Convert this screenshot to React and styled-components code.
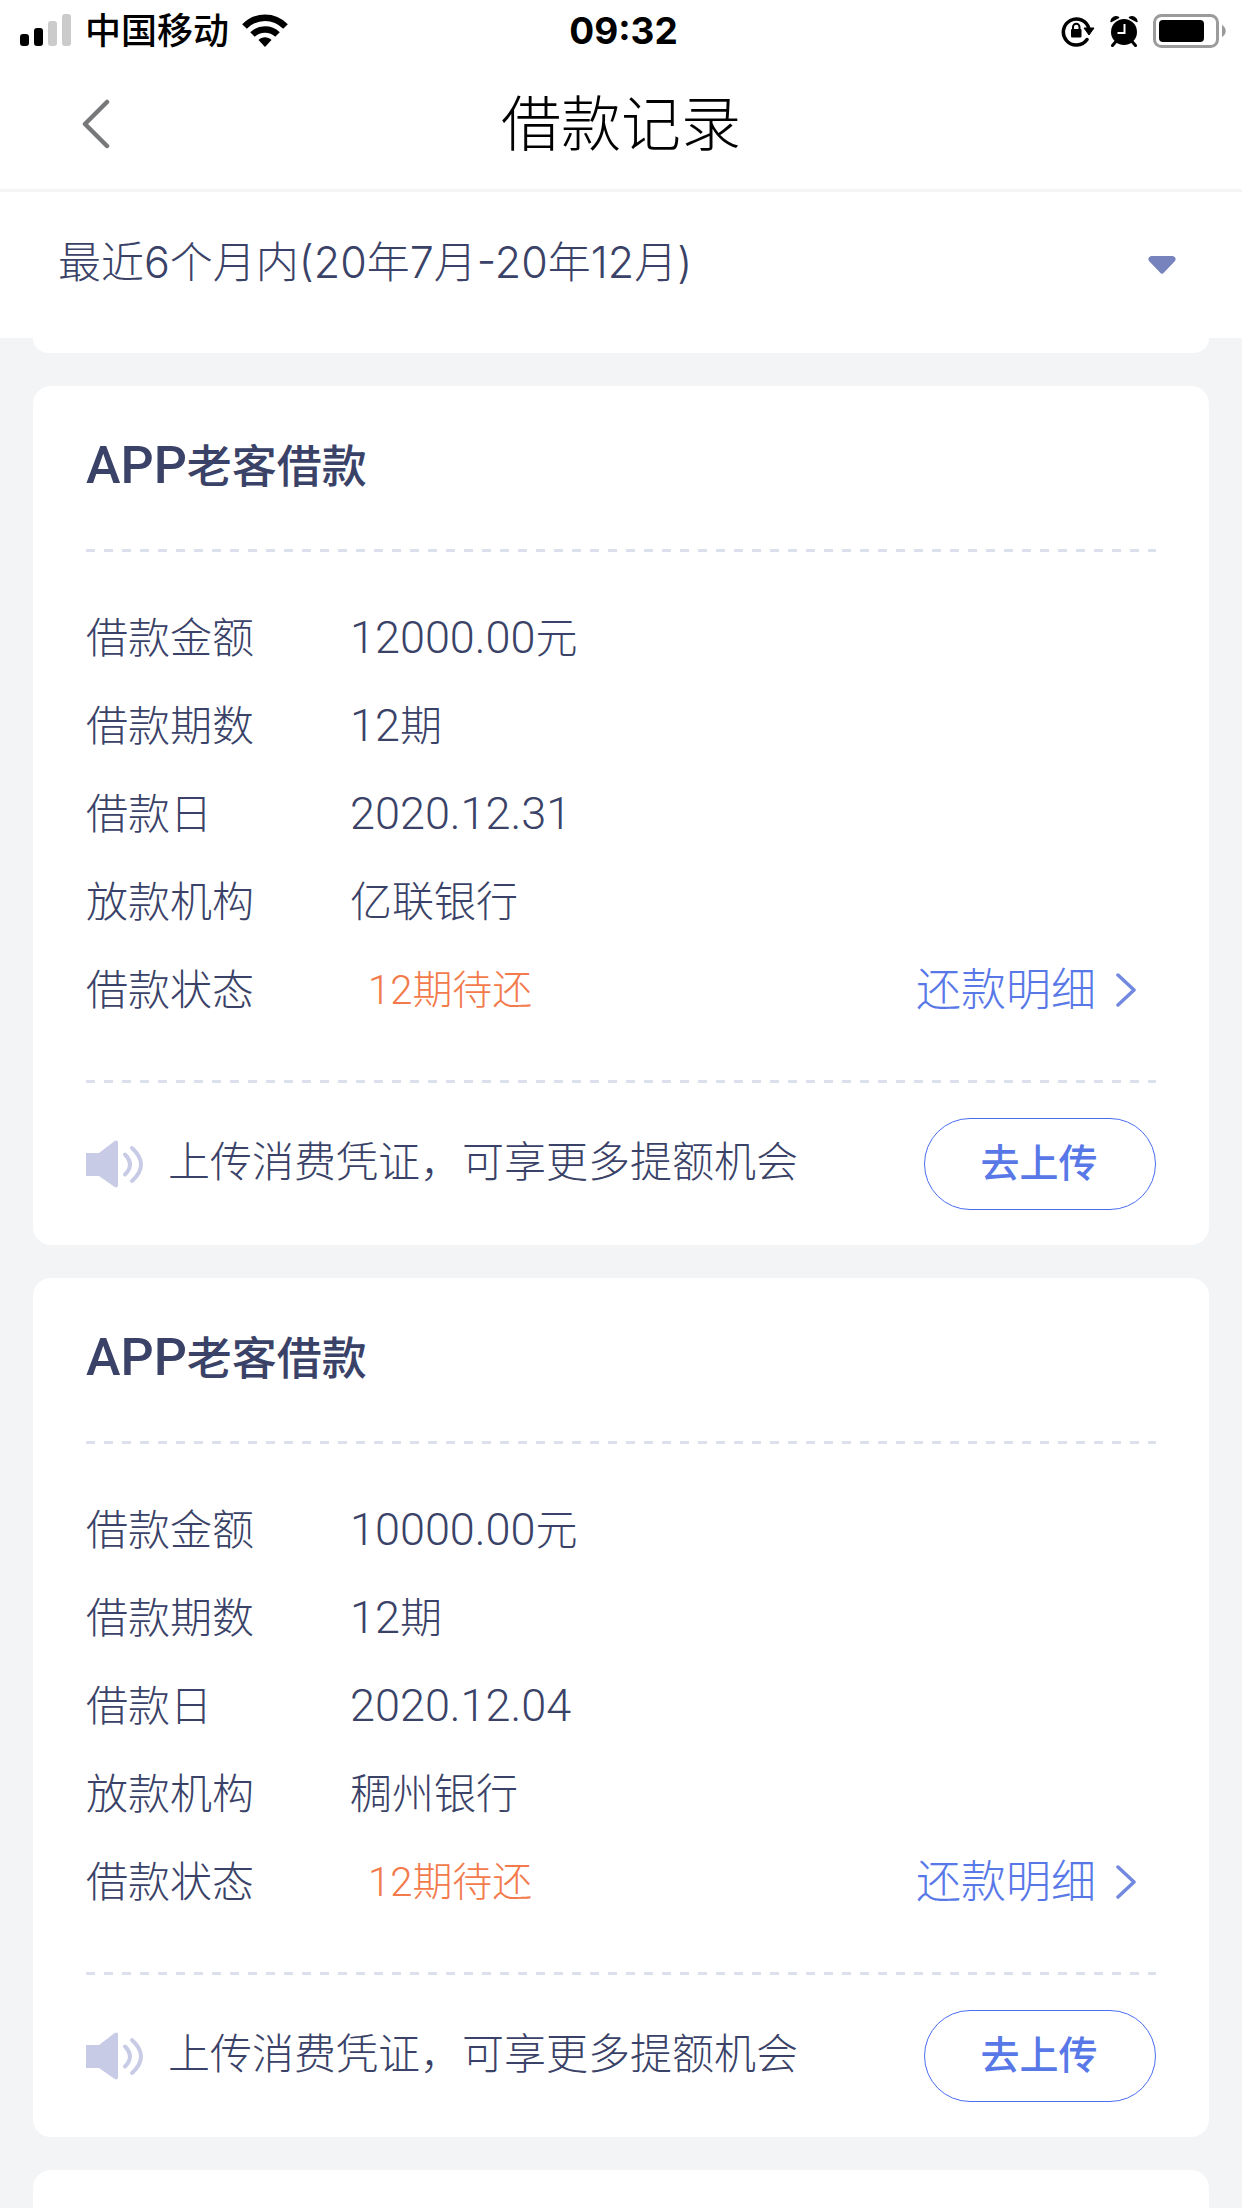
import styled, { createGlobalStyle } from 'styled-components';

const GlobalStyle = createGlobalStyle`
  * {
    box-sizing: border-box;
  }

  body {
    margin: 0;
    background: #f3f4f6;
    color: #3a4268;
    font-family: Inter, "Noto Sans CJK SC", sans-serif;
    font-weight: 300;
  }

  button,
  select {
    font-family: inherit;
  }
`;

const Page = styled.div`
  display: flex;
  flex-direction: column;
  min-height: 100vh;
`;

// Status bar
const StatusBar = styled.div`
  display: grid;
  grid-template-columns: 1fr auto 1fr;
  align-items: center;
  height: 62px;
  padding: 0 15px 0 20px;
  background: #fff;
  color: #000;
`;

const StatusGroup = styled.div`
  display: flex;
  align-items: center;
  gap: ${(props) => props.$gap}px;
  justify-content: ${(props) => (props.$end ? 'flex-end' : 'flex-start')};
`;

const Carrier = styled.span`
  font-size: 36px;
  line-height: 60px;
  font-weight: 500;
`;

const Clock = styled.time`
  font-size: 37px;
  line-height: 60px;
  font-weight: 700;
`;

// Title bar
const Header = styled.header`
  display: grid;
  grid-template-columns: 1fr auto 1fr;
  align-items: center;
  height: 130px;
  padding: 0 60px 4px;
  background: #fff;
  border-bottom: 3px solid #f5f5f6;
`;

const BackButton = styled.button`
  display: flex;
  justify-self: start;
  padding: 12px 20px;
  border: 0;
  background: none;
  cursor: pointer;
`;

const PageTitle = styled.h1`
  margin: 0;
  color: #000;
  font-size: 60px;
  line-height: 90px;
  font-weight: 300;
`;

// Period filter
const Filter = styled.label`
  display: grid;
  grid-template-columns: 1fr 28px;
  align-items: center;
  height: 146px;
  padding: 0 66px 0 58px;
  background: #fff;
`;

const PeriodSelect = styled.select`
  width: 100%;
  height: 84px;
  padding: 0 0 6px;
  border: 0;
  background: none;
  appearance: none;
  color: inherit;
  font-size: 43px;
  font-weight: 300;
`;

// Records
const List = styled.main`
  display: flex;
  flex: 1;
  flex-direction: column;
  gap: 33px;
  padding: 0 33px;
`;

const Card = styled.article`
  padding: 0 53px;
  border-radius: 18px;
  background: #fff;
`;

const CardEnd = styled.div`
  height: 15px;
  border-radius: 0 0 18px 18px;
  background: #fff;
`;

const CardStart = styled.div`
  flex: 1;
  min-height: 37px;
  border-radius: 18px 18px 0 0;
  background: #fff;
`;

const CardTitle = styled.h2`
  height: 163px;
  margin: 0;
  font-size: 45px;
  line-height: 160px;
  font-weight: 500;
`;

const Divider = styled.hr`
  height: 3px;
  margin: 0;
  border: 0;
  background: repeating-linear-gradient(90deg, #dcdfec 0 9px, transparent 9px 18px);
`;

const Details = styled.dl`
  margin: 0;
  padding: 42px 0 46px;
  font-size: 42px;
`;

const Row = styled.div`
  display: grid;
  grid-template-columns: 264px 1fr auto;
  height: 88px;
  line-height: 88px;
`;

const Label = styled.dt``;

const Value = styled.dd`
  margin: 0;
`;

const Status = styled(Value)`
  padding-left: 18px;
  color: #f27a4b;
  font-size: 40px;
`;

// Latin letters and digits run larger than the Chinese text next to them
const Latin = styled.span`
  font-family: Roboto, sans-serif;
  font-size: ${(props) => props.$size}px;
  font-weight: ${(props) => props.$weight || 300};
`;

const DetailLink = styled.a`
  display: flex;
  align-items: center;
  gap: 20px;
  padding-right: 18px;
  color: #5878e8;
  font-size: 45px;
  text-decoration: none;
`;

const CardFooter = styled.div`
  display: flex;
  align-items: center;
  height: 162px;
`;

const Notice = styled.p`
  flex: 1;
  margin: 0 0 4px 24px;
  font-size: 42px;
  line-height: 60px;
`;

const UploadButton = styled.button`
  width: 232px;
  height: 92px;
  padding: 0 2px 2px 0;
  border: 1px solid #4a6df0;
  border-radius: 46px;
  background: #fff;
  color: #5878e8;
  font-size: 39px;
  line-height: 60px;
  font-weight: 500;
  cursor: pointer;
`;

const SignalIcon = () => (
  <svg width="52" height="34" viewBox="0 0 52 34" aria-hidden="true">
    <rect x="0" y="20" width="9" height="12" rx="3" />
    <rect x="14" y="14" width="9" height="18" rx="3" />
    <rect x="28" y="7" width="9" height="25" rx="3" fill="#cbcbcb" />
    <rect x="42" y="0" width="9" height="32" rx="3" fill="#cbcbcb" />
  </svg>
);

const WifiIcon = () => (
  <svg width="46" height="34" viewBox="0 0 46 34" aria-hidden="true">
    <g fill="none" stroke="#000" strokeWidth="6.5">
      <path d="M2.5 12.5C14 .8 32 .8 43.500 12.500" />
      <path d="M10.500 20.500C17.500 13.800 28.500 13.800 35.500 20.500" />
    </g>
    <path d="M16.500 26C20 22.200 26 22.200 29.500 26L23 33Z" />
  </svg>
);

const RotationLockIcon = () => (
  <svg width="34" height="32" viewBox="0 0 34 32" aria-hidden="true">
    <path d="M26 24.500A13 13 0 1 1 28 14" fill="none" stroke="#000" strokeWidth="3.500" strokeLinecap="round" />
    <path d="M23 13H33L28 20Z" stroke="#000" strokeLinejoin="round" />
    <rect x="10" y="14" width="10.500" height="8.500" rx="1" />
    <path d="M12 15V12A3 3 0 0 1 18.500 12V15" fill="none" stroke="#000" strokeWidth="2" />
  </svg>
);

const AlarmIcon = () => (
  <svg width="28" height="32" viewBox="0 0 28 32" aria-hidden="true">
    <circle cx="14" cy="17" r="13" />
    <path d="M1 6.500A5 5 0 0 1 8.500 2.500ZM27 6.500A5 5 0 0 0 19.500 2.500Z" stroke="#000" strokeWidth="1.500" strokeLinejoin="round" />
    <path d="M5.500 27L2.500 30.500M22.500 27L25.500 30.500" stroke="#000" strokeWidth="3" strokeLinecap="round" />
    <path d="M14.500 9V18H7.500" fill="none" stroke="#fff" strokeWidth="2" />
  </svg>
);

const BatteryIcon = () => (
  <svg width="74" height="34" viewBox="0 0 74 34" aria-hidden="true">
    <rect x="1.500" y="1.500" width="63" height="31" rx="7" fill="none" stroke="#9b9b9b" strokeWidth="3" />
    <rect x="6" y="6" width="45" height="22" rx="4" />
    <path d="M69 11C74 14 74 20 69 23Z" fill="#9b9b9b" />
  </svg>
);

const BackIcon = () => (
  <svg width="30" height="50" viewBox="0 0 30 50" fill="none" aria-hidden="true">
    <path d="M27 3L5 25L27 47" stroke="#77787a" strokeWidth="4.500" strokeLinecap="round" strokeLinejoin="round" />
  </svg>
);

const CaretIcon = () => (
  <svg width="28" height="18" viewBox="0 0 28 18" aria-hidden="true">
    <path d="M3 0H25Q29 1.500 27 5L16 16.500Q14 19 12 16.500L1 5Q-1 1.500 3 0Z" fill="#7683bd" />
  </svg>
);

const ArrowIcon = () => (
  <svg width="22" height="34" viewBox="0 0 22 34" fill="none" aria-hidden="true">
    <path d="M2 2L18 17L2 32" stroke="#7389df" strokeWidth="3.500" strokeLinecap="round" strokeLinejoin="round" />
  </svg>
);

const SpeakerIcon = () => (
  <svg width="58" height="48" viewBox="0 0 58 48" aria-hidden="true">
    <path d="M0 13H13L28 1.500Q32 -1 32 3V45Q32 49 28 46.500L13 36H0Z" fill="#c8cbe6" />
    <g fill="none" stroke="#c8cbe6" strokeWidth="4" strokeLinecap="round">
      <path d="M39 14.500Q49 24.500 39 34.500" />
      <path d="M46 8Q64 24.500 46 41" />
    </g>
  </svg>
);

const records = [
  { id: 1, amount: '12000.00', periods: 12, date: '2020.12.31', bank: '亿联银行' },
  { id: 2, amount: '10000.00', periods: 12, date: '2020.12.04', bank: '稠州银行' },
];

const LoanCard = ({ record }) => (
  <Card>
    <CardTitle>
      <Latin $size={52} $weight={500}>APP</Latin>老客借款
    </CardTitle>
    <Divider />
    <Details>
      <Row>
        <Label>借款金额</Label>
        <Value>
          <Latin $size={45}>{record.amount}</Latin>元
        </Value>
      </Row>
      <Row>
        <Label>借款期数</Label>
        <Value>
          <Latin $size={45}>{record.periods}</Latin>期
        </Value>
      </Row>
      <Row>
        <Label>借款日</Label>
        <Value>
          <Latin $size={45}>{record.date}</Latin>
        </Value>
      </Row>
      <Row>
        <Label>放款机构</Label>
        <Value>{record.bank}</Value>
      </Row>
      <Row>
        <Label>借款状态</Label>
        <Status>
          <Latin $size={40}>{record.periods}</Latin>期待还
        </Status>
        <Value>
          <DetailLink href="#detail">
            还款明细
            <ArrowIcon />
          </DetailLink>
        </Value>
      </Row>
    </Details>
    <Divider />
    <CardFooter>
      <SpeakerIcon />
      <Notice>上传消费凭证，可享更多提额机会</Notice>
      <UploadButton type="button">去上传</UploadButton>
    </CardFooter>
  </Card>
);

const App = () => {
  return (
    <>
      <GlobalStyle />
      <Page>
        <StatusBar>
          <StatusGroup $gap={13}>
            <SignalIcon />
            <Carrier>中国移动</Carrier>
            <WifiIcon />
          </StatusGroup>
          <Clock>09:32</Clock>
          <StatusGroup $gap={15} $end>
            <RotationLockIcon />
            <AlarmIcon />
            <BatteryIcon />
          </StatusGroup>
        </StatusBar>
        <Header>
          <BackButton type="button" aria-label="返回">
            <BackIcon />
          </BackButton>
          <PageTitle>借款记录</PageTitle>
        </Header>
        <Filter>
          <PeriodSelect aria-label="借款时间">
            <option>最近6个月内(20年7月-20年12月)</option>
          </PeriodSelect>
          <CaretIcon />
        </Filter>
        <List>
          <CardEnd />
          {records.map((record) => (
            <LoanCard key={record.id} record={record} />
          ))}
          <CardStart />
        </List>
      </Page>
    </>
  );
};

export default App;
